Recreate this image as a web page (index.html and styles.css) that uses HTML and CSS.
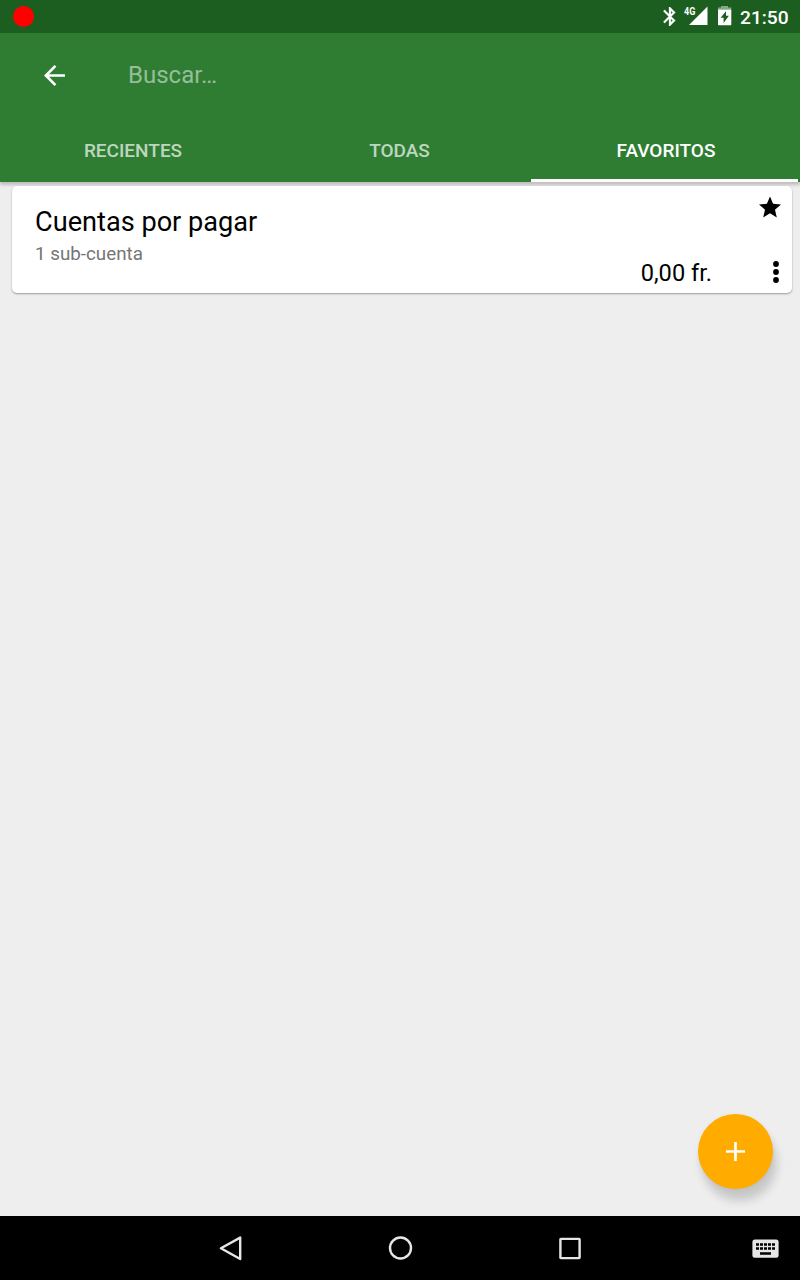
FILE: index.html
```
<!DOCTYPE html>
<html lang="es">
<head>
<meta charset="utf-8">
<title>Cuentas</title>
<link rel="stylesheet" href="styles.css">
</head>
<body>
<div class="screen">
  <div class="status-bar">
    <span class="record-dot"></span>
    <div class="status-icons">
      <svg class="bluetooth" viewBox="5 2 13 20" fill="#fff" stroke="#fff" stroke-width=".3"><path d="M17.71 7.71L12 2h-1v7.59L6.41 5 5 6.41 10.59 12 5 17.59 6.41 19 11 14.41V22h1l5.71-5.71-4.3-4.29 4.3-4.29zM13 5.83l1.88 1.88L13 9.59V5.83zm1.88 10.46L13 18.17v-3.76l1.88 1.88z"/></svg>
      <div class="signal"><span class="network">4G</span><svg class="triangle" viewBox="0 0 19 19"><path d="M0 19H18.500V.5z" fill="#fff"/></svg></div>
      <svg class="battery" viewBox="0 0 14 20"><path d="M3 0h7v1.500h3.300v2H0v-2h3z" fill="#83a985"/><path fill-rule="evenodd" d="M0 3.500h13.300v15q0 .8-.8.8H.8q-.8 0-.8-.8zM8 5.200L2.600 11.700h3v5.200L10.900 9.800H8z" fill="#fff"/></svg>
      <span class="clock">21:50</span>
    </div>
  </div>
  <header class="app-bar">
    <div class="toolbar">
      <svg class="back" viewBox="4 4 16 16" fill="#fff"><path d="M20 11H7.830l5.590-5.590L12 4l-8 8 8 8 1.410-1.410L7.830 13H20v-2z"/></svg>
      <span class="search">Buscar…</span>
    </div>
    <nav class="tabs">
      <div class="tab">RECIENTES</div>
      <div class="tab">TODAS</div>
      <div class="tab active">FAVORITOS</div>
    </nav>
  </header>
  <main class="content">
    <article class="card">
      <div class="card-text">
        <div class="title">Cuentas por pagar</div>
        <div class="subtitle">1 sub-cuenta</div>
      </div>
      <div class="amount">0,00 fr.</div>
      <div class="actions">
        <svg class="star" viewBox="2 2 20 19"><path d="M12 17.270L18.180 21l-1.640-7.030L22 9.240l-7.190-.61L12 2 9.190 8.630 2 9.240l5.460 4.730L5.820 21z"/></svg>
        <svg class="more" viewBox="0 0 6 22"><circle cx="3" cy="3" r="2.900"/><circle cx="3" cy="11" r="2.900"/><circle cx="3" cy="19" r="2.900"/></svg>
      </div>
    </article>
    <div class="fab"><svg class="plus" viewBox="0 0 19 19"><path d="M9.500 0v19M0 9.500h19" stroke="#fff" stroke-width="2.700"/></svg></div>
  </main>
  <footer class="nav-bar">
    <span></span>
    <svg class="nav-icon" viewBox="0 0 26 26"><path d="M2.900 13.300L22.200 2.600V24z"/></svg>
    <svg class="nav-icon" viewBox="0 0 26 26"><circle cx="13.500" cy="13" r="10.500"/></svg>
    <svg class="nav-icon" viewBox="0 0 26 26"><rect x="3.400" y="3.900" width="19.200" height="19.200" rx=".5"/></svg>
    <svg class="keyboard" viewBox="0 0 27 19"><rect x=".4" y=".4" width="26.200" height="18.400" rx="2.500" fill="#e6e6e6"/><path d="M4 5.500h19M4 9.500h19" stroke="#000" stroke-width="2.700" stroke-dasharray="3 1"/><path d="M8 14.500h11" stroke="#000" stroke-width="2.500"/></svg>
  </footer>
</div>
</body>
</html>
```
FILE: styles.css
```
* { box-sizing: border-box; }
body { margin: 0; font-family: Roboto, sans-serif; }
svg { display: block; flex: none; }
.screen { width: 800px; height: 1280px; display: flex; flex-direction: column; background: #eee; overflow: hidden; }
.status-bar { height: 33px; background: #1b5e20; display: flex; align-items: center; justify-content: space-between; padding: 0 11px 0 13.400px; }
.record-dot { width: 21px; height: 21px; border-radius: 50%; background: #f00; }
.status-icons { display: flex; align-items: flex-start; height: 33px; padding-top: 6px; color: #fff; }
.bluetooth { width: 13px; height: 19px; margin-top: .5px; }
.signal { display: flex; align-items: flex-start; margin-left: 8px; width: 24px; }
.network { width: 5px; font-size: 10px; font-weight: 700; line-height: 11px; white-space: nowrap; transform: scaleX(.9); transform-origin: left; }
.triangle { width: 19px; height: 19px; }
.battery { width: 14px; height: 20px; margin-left: 10px; }
.clock { width: 49px; margin: -5px 0 0 8px; font-size: 19.200px; font-weight: 500; line-height: 34px; white-space: nowrap; }
.app-bar { height: 149px; background: #2e7d32; box-shadow: 0 3px 3px rgba(0,0,0,.2); position: relative; }
.toolbar { height: 85px; display: flex; align-items: center; padding-left: 44px; }
.back { width: 21px; height: 21px; }
.search { margin: 0 0 2px 63px; font-size: 24px; line-height: 28px; color: rgba(255,255,255,.5); }
.tabs { height: 64px; display: grid; grid-template-columns: 266px 265px 267px; }
.tab { text-align: center; font-size: 19px; font-weight: 500; line-height: 66px; height: 64px; color: rgba(255,255,255,.7); }
.tab:nth-child(2) { padding-left: 2px; }
.tab.active { color: #fff; border-bottom: 3px solid #fff; padding-left: 3px; }
.content { flex: 1; display: flex; flex-direction: column; justify-content: space-between; padding: 4px 8px 27px 12px; position: relative; }
.card { height: 107px; background: #fff; border-radius: 5px; box-shadow: 0 1px 2px rgba(0,0,0,.35); display: flex; color: #000; }
.card-text { flex: 1; padding: 20px 0 0 23px; }
.title { font-size: 27.150px; line-height: 32px; }
.subtitle { font-size: 18.800px; line-height: 33px; color: #757575; }
.amount { align-self: flex-end; font-size: 23.600px; line-height: 28px; margin-bottom: 6px; }
.actions { width: 80px; display: flex; flex-direction: column; justify-content: space-between; align-items: flex-end; padding: 10px 11px 10px 0; }
.star { width: 22px; height: 22px; margin-right: -.4px; }
.more { width: 6px; height: 22px; margin-right: 2px; }
.fab { align-self: flex-end; width: 75px; height: 75px; margin-right: 19px; border-radius: 50%; background: #ffab00; display: flex; align-items: center; justify-content: center; box-shadow: 4px 12px 10px rgba(0,0,0,.16), 0 1px 5px rgba(0,0,0,.06); }
.plus { width: 19px; height: 19px; }
.nav-bar { height: 64px; background: #000; position: relative; display: grid; grid-template-columns: 218px 169px 170px 195px 1fr; align-items: center; }
.nav-icon { width: 26px; height: 26px; fill: none; stroke: #e6e6e6; stroke-width: 2.400; stroke-linejoin: round; }
.keyboard { width: 27px; height: 19px; }
```
